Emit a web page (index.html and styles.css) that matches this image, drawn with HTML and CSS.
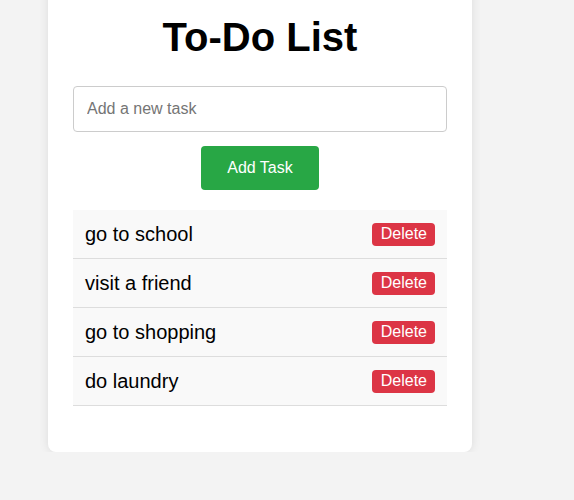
FILE: index.html
```html
<!DOCTYPE html>
<html>
<head>
<meta charset="utf-8">
<link rel="stylesheet" href="styles.css">
</head>
<body>
<div class="card">
  <h1 class="title">To-Do List</h1>
  <input class="task-input" type="text" placeholder="Add a new task">
  <button class="add-btn">Add Task</button>
  <ul class="task-list">
    <li class="task"><span class="task-text">go to school</span><button class="del-btn">Delete</button></li>
    <li class="task"><span class="task-text">visit a friend</span><button class="del-btn">Delete</button></li>
    <li class="task"><span class="task-text">go to shopping</span><button class="del-btn">Delete</button></li>
    <li class="task"><span class="task-text">do laundry</span><button class="del-btn">Delete</button></li>
  </ul>
</div>
</body>
</html>
```
FILE: styles.css
```css
html, body {
  margin: 0;
  padding: 0;
}
body {
  background: #f3f3f3;
  font-family: "Liberation Sans", Arial, sans-serif;
  overflow: hidden;
}
.card {
  box-sizing: border-box;
  width: 424px;
  margin: -38px 0 0 48px;
  padding: 25px;
  background: #fff;
  border-radius: 8px;
  box-shadow: 0 0 10px rgba(0, 0, 0, 0.1);
}
.title {
  font-size: 40px;
  font-weight: bold;
  text-align: center;
  margin: 27px 0 26px;
  line-height: 46px;
  color: #000;
}
.task-input {
  display: block;
  box-sizing: border-box;
  width: 100%;
  height: 46px;
  padding: 0 13px;
  font-family: "Liberation Sans", Arial, sans-serif;
  font-size: 16px;
  border: 1px solid #ccc;
  border-radius: 4px;
  outline: none;
  margin: 0 0 14px;
}
.task-input::placeholder {
  color: #757575;
}
.add-btn {
  display: block;
  margin: 0 auto;
  width: 118px;
  height: 44px;
  border: none;
  border-radius: 4px;
  background: #28a745;
  color: #fff;
  font-family: "Liberation Sans", Arial, sans-serif;
  font-size: 16px;
  padding: 0;
}
.task-list {
  list-style: none;
  margin: 20px 0 21px;
  padding: 0;
}
.task {
  display: flex;
  align-items: center;
  justify-content: space-between;
  padding: 12px;
  background: #f9f9f9;
  border-bottom: 1px solid #ddd;
}
.task-text {
  font-size: 20px;
  line-height: 24px;
  color: #000;
}
.del-btn {
  border: none;
  border-radius: 4px;
  background: #dc3545;
  color: #fff;
  font-family: "Liberation Sans", Arial, sans-serif;
  font-size: 16px;
  line-height: 18px;
  padding: 2px 8px 3px 9px;
}
```
